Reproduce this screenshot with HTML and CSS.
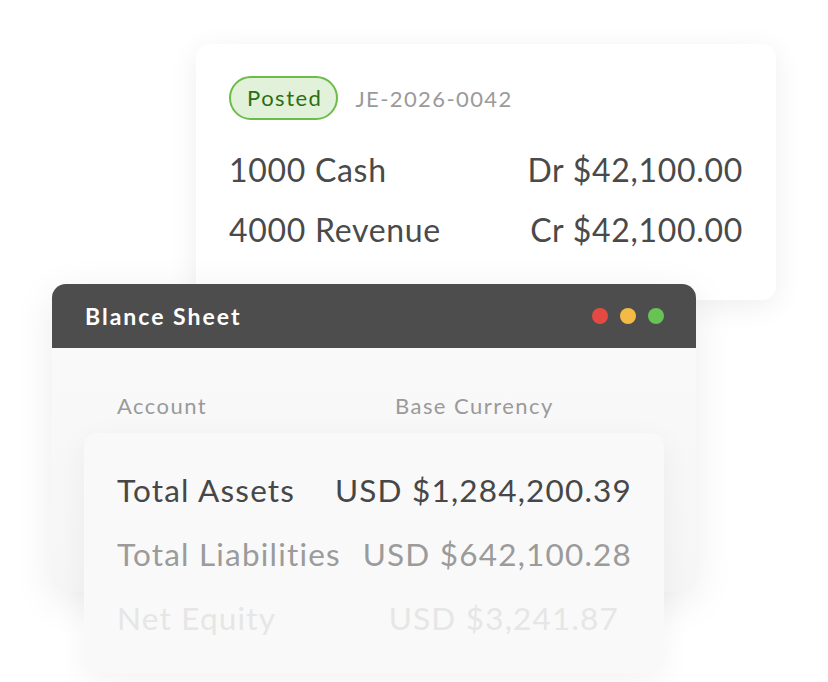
FILE: index.html
```html
<!DOCTYPE html>
<html>
 <head>
  <meta charset="utf-8">
  <title>Journal entry and balance sheet</title>
  <link rel="stylesheet" href="styles.css">
 </head>
 <body>
  <div class="stage">

   <div class="entry">
    <div class="entry-head">
     <span class="badge">Posted</span>
     <span class="entry-id">JE-2026-0042</span>
    </div>
    <div class="entry-row"><span>1000 Cash</span><span>Dr $42,100.00</span></div>
    <div class="entry-row"><span>4000 Revenue</span><span>Cr $42,100.00</span></div>
   </div>

   <div class="sheet">
    <div class="sheet-bar">
     <span class="sheet-title">Blance Sheet</span>
     <span class="dots">
      <i class="dot red"></i><i class="dot yellow"></i><i class="dot green"></i>
     </span>
    </div>
    <div class="sheet-body">
     <div class="cols">
      <span class="col-account">Account</span>
      <span>Base Currency</span>
     </div>
    </div>
   </div>

   <div class="totals">
    <div class="total-row strong"><span>Total Assets</span><span>USD $1,284,200.39</span></div>
    <div class="total-row mid"><span>Total Liabilities</span><span>USD $642,100.28</span></div>
    <div class="total-row faint"><span>Net Equity</span><span>USD $3,241.87</span></div>
   </div>

  </div>
 </body>
</html>
```

FILE: styles.css
```css
html, body {
    margin: 0;
    background: #ffffff;
}
body {
    font-family: "Lato", "Open Sans", sans-serif;
}
.stage {
    position: relative;
    width: 828px;
    height: 682px;
    overflow: hidden;
}

/* journal entry card */
.entry {
    position: absolute;
    left: 196px;
    top: 44px;
    width: 580px;
    height: 256px;
    box-sizing: border-box;
    padding: 32px 33px 0 33px;
    background: #ffffff;
    border-radius: 14px;
    box-shadow: 0 6px 30px rgba(0, 0, 0, 0.07);
}
.entry-head {
    display: flex;
    align-items: center;
    gap: 17px;
    margin-bottom: 20px;
}
.badge {
    display: inline-block;
    height: 44px;
    line-height: 40px;
    padding: 0 14px 0 16px;
    box-sizing: border-box;
    border: 2px solid #6bbd47;
    border-radius: 22px;
    background: #e2f1d9;
    color: #2b6f12;
    font-size: 22px;
    letter-spacing: 1.5px;
}
.entry-id {
    color: #9a9a9a;
    font-size: 22px;
    letter-spacing: 1.4px;
}
.entry-row {
    display: flex;
    justify-content: space-between;
    height: 60px;
    line-height: 60px;
    font-size: 32px;
    letter-spacing: 0.7px;
    color: #4a4a4a;
}

/* balance sheet window */
.sheet {
    position: absolute;
    left: 52px;
    top: 284px;
    width: 644px;
    height: 308px;
    border-radius: 14px;
    background: #f6f6f6;
    overflow: hidden;
    box-shadow: 0 10px 40px rgba(0, 0, 0, 0.08);
}
.sheet-bar {
    display: flex;
    align-items: center;
    justify-content: space-between;
    height: 64px;
    padding: 0 32px 0 33px;
    background: #4d4d4d;
}
.sheet-title {
    color: #ffffff;
    font-size: 23px;
    font-weight: bold;
    letter-spacing: 2px;
}
.dots {
    display: flex;
    gap: 12px;
}
.dot {
    width: 16px;
    height: 16px;
    border-radius: 50%;
}
.red { background: #e44a43; }
.yellow { background: #f3bb45; }
.green { background: #67c354; }
.sheet-body {
    padding: 44px 65px 0 65px;
    background: linear-gradient(#f9f9f9, #f4f4f4);
    height: 100%;
}
.cols {
    display: flex;
    color: #9a9a9a;
    font-size: 22px;
    letter-spacing: 1.45px;
}
.col-account {
    width: 278px;
}

/* totals panel overlapping the window */
.totals {
    position: absolute;
    left: 84px;
    top: 433px;
    width: 580px;
    height: 240px;
    box-sizing: border-box;
    padding: 25px 32px 0 33px;
    border-radius: 14px;
    background: #f9f9f9;
    box-shadow: 0 8px 30px rgba(0, 0, 0, 0.05);
}
.total-row {
    display: flex;
    justify-content: space-between;
    height: 64px;
    line-height: 64px;
    font-size: 31.5px;
    letter-spacing: 1.2px;
}
.strong { color: #474747; }
.mid { color: #9b9b9b; }
.faint {
    color: #e6e6e6;
    padding-right: 13px;
}
```
